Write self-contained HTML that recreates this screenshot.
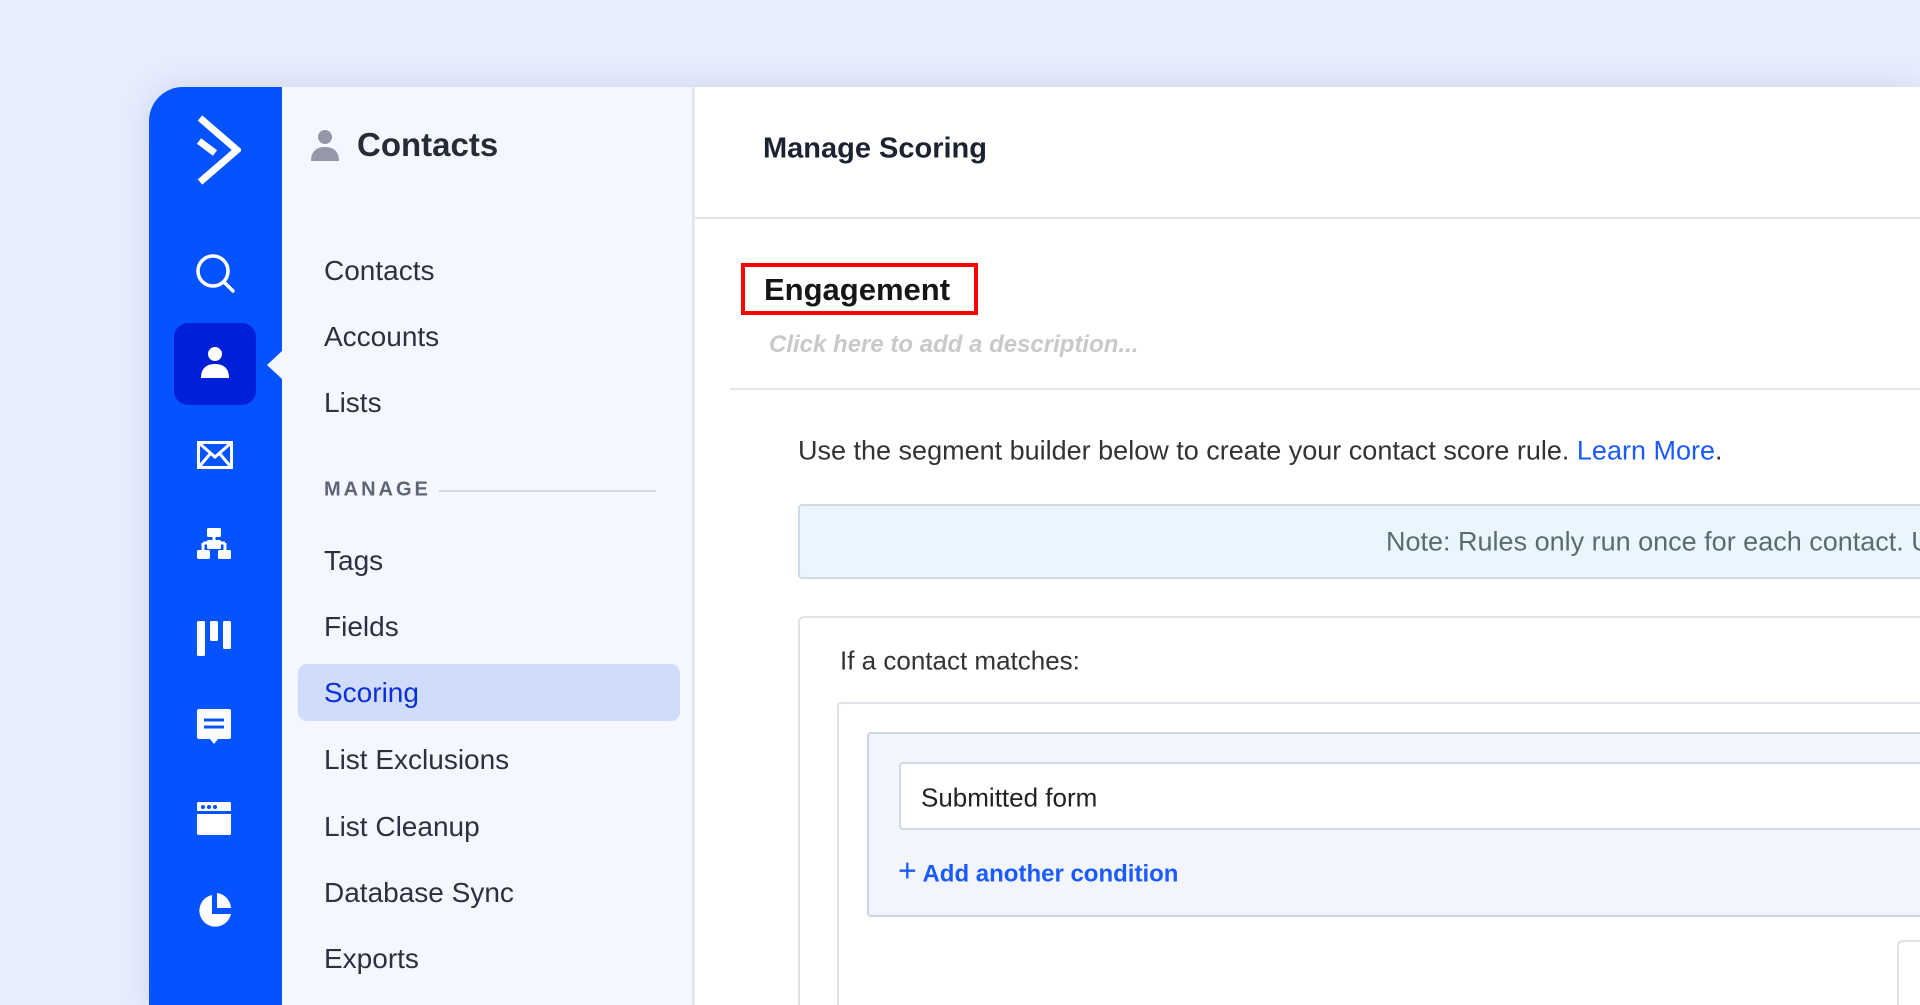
<!DOCTYPE html>
<html><head><meta charset="utf-8"><style>
*{margin:0;padding:0;box-sizing:border-box}
html,body{width:1920px;height:1005px;overflow:hidden}
body{background:#e7edfd;font-family:"Liberation Sans",sans-serif;position:relative}
.abs{position:absolute}
.panel{left:149px;top:87px;width:1771px;height:918px;border-top-left-radius:34px;overflow:hidden;box-shadow:0 0 30px rgba(60,80,140,.15)}
.side{left:0;top:0;width:133px;height:918px;background:#0552ff}
.sub{left:133px;top:0;width:412px;height:918px;background:#f5f7fe;border-right:2px solid #e1e5ee}
.main{left:546px;top:0;width:1225px;height:918px;background:#fff;overflow:hidden}
.nav{position:absolute;left:174px;font-size:28px;color:#2b3140;transform:translateY(-50%)}
.t{position:absolute;transform:translateY(-50%);white-space:nowrap}
</style></head><body>
<div class="abs panel">
 <div class="abs side">
  <svg class="abs" style="left:46px;top:28px" width="46" height="70" viewBox="0 0 46 70"><path d="M5 3 L42 35 L5 67" fill="none" stroke="#fff" stroke-width="7" stroke-linejoin="miter"/><path d="M4 26 L20 38" stroke="#fff" stroke-width="7"/></svg>
  <svg class="abs" style="left:46px;top:166px" width="44" height="44" viewBox="0 0 44 44"><circle cx="18" cy="18" r="15" fill="none" stroke="#fff" stroke-width="3.5"/><path d="M29 29 L38 38" stroke="#fff" stroke-width="3.5" stroke-linecap="round"/></svg>
  <div class="abs" style="left:25px;top:236px;width:82px;height:82px;background:#0020d8;border-radius:14px"></div>
  <svg class="abs" style="left:49px;top:258px" width="34" height="36" viewBox="0 0 34 36"><circle cx="17" cy="9" r="7" fill="#fff"/><path d="M3 33 C3 22 10 19 17 19 C24 19 31 22 31 33 Z" fill="#fff"/></svg>
  <div class="abs" style="left:118px;top:264px;width:0;height:0;border-top:14px solid transparent;border-bottom:14px solid transparent;border-right:15px solid #f5f7fe"></div>
  <svg class="abs" style="left:48px;top:354px" width="36" height="28" viewBox="0 0 36 28"><rect x="1.5" y="1.5" width="33" height="25" fill="none" stroke="#fff" stroke-width="3"/><path d="M2 2 L18 16 L34 2 M2 26 L13 13 M34 26 L23 13" stroke="#fff" stroke-width="3" fill="none"/></svg>
  <svg class="abs" style="left:48px;top:440px" width="34" height="36" viewBox="0 0 34 36"><rect x="10" y="1" width="14" height="9" rx="1.5" fill="#fff"/><path d="M17 10 V16 M6 16 H28 M6 16 V24 M28 16 V24" stroke="#fff" stroke-width="3" fill="none"/><rect x="0" y="23" width="13" height="9" rx="1.5" fill="#fff"/><rect x="21" y="23" width="13" height="9" rx="1.5" fill="#fff"/><rect x="10" y="13" width="14" height="9" rx="1.5" fill="#fff"/></svg>
  <svg class="abs" style="left:48px;top:534px" width="34" height="36" viewBox="0 0 34 36"><rect x="0" y="0" width="8" height="35" rx="1.5" fill="#fff"/><rect x="13" y="0" width="8" height="20" rx="1.5" fill="#fff"/><rect x="26" y="0" width="8" height="28" rx="1.5" fill="#fff"/></svg>
  <svg class="abs" style="left:48px;top:622px" width="34" height="36" viewBox="0 0 34 36"><path d="M2 0 H32 Q34 0 34 2 V28 Q34 30 32 30 H21 L17 35 L13 30 H2 Q0 30 0 28 V2 Q0 0 2 0 Z" fill="#fff"/><path d="M7 11 H27 M7 18 H27" stroke="#0552ff" stroke-width="3"/></svg>
  <svg class="abs" style="left:48px;top:715px" width="34" height="34" viewBox="0 0 34 34"><rect x="0" y="0" width="34" height="33" rx="1.5" fill="#fff"/><rect x="0" y="9" width="34" height="3" fill="#0552ff"/><circle cx="6" cy="5" r="2" fill="#0552ff"/><circle cx="12" cy="5" r="2" fill="#0552ff"/><circle cx="18" cy="5" r="2" fill="#0552ff"/></svg>
  <svg class="abs" style="left:48px;top:806px" width="36" height="36" viewBox="0 0 36 36"><path d="M15 2 A16 16 0 1 0 34 21 L15 21 Z" fill="#fff"/><path d="M20 0 A16 16 0 0 1 34 15 L20 15 Z" fill="#fff"/></svg>
 </div>
 <div class="abs sub">
  <svg class="abs" style="left:28px;top:42px" width="30" height="32" viewBox="0 0 30 32"><circle cx="15" cy="8" r="7" fill="#9498a8"/><path d="M1 32 C1 22 7 18 15 18 C23 18 29 22 29 32 Z" fill="#9498a8"/></svg>
  <div class="t" style="left:75px;top:58px;font-size:33px;font-weight:bold;color:#262b38">Contacts</div>
  <div class="nav" style="left:42px;top:184px">Contacts</div>
  <div class="nav" style="left:42px;top:250px">Accounts</div>
  <div class="nav" style="left:42px;top:316px">Lists</div>
  <div class="nav" style="left:42px;top:403px;font-size:20px;font-weight:bold;letter-spacing:3px;color:#5e6577">MANAGE</div>
  <div class="abs" style="left:157px;top:403px;width:217px;height:2px;background:#d3d8e4"></div>
  <div class="nav" style="left:42px;top:474px">Tags</div>
  <div class="nav" style="left:42px;top:540px">Fields</div>
  <div class="abs" style="left:16px;top:577px;width:382px;height:57px;background:#cfdcfc;border-radius:9px"></div>
  <div class="nav" style="left:42px;top:606px;color:#0d2fd8">Scoring</div>
  <div class="nav" style="left:42px;top:673px">List Exclusions</div>
  <div class="nav" style="left:42px;top:740px">List Cleanup</div>
  <div class="nav" style="left:42px;top:806px">Database Sync</div>
  <div class="nav" style="left:42px;top:872px">Exports</div>
 </div>
 <div class="abs main">
  <div class="t" style="left:68px;top:62px;font-size:29px;font-weight:bold;color:#1d2230">Manage Scoring</div>
  <div class="abs" style="left:0;top:130px;right:0;height:2px;background:#dfe3ea"></div>
  <div class="abs" style="left:46px;top:176px;width:237px;height:52px;border:4px solid #f00"></div>
  <div class="t" style="left:69px;top:203px;font-size:31px;font-weight:bold;color:#161616">Engagement</div>
  <div class="t" style="left:74px;top:258px;font-size:24px;font-weight:bold;font-style:italic;color:#c9c9c9">Click here to add a description...</div>
  <div class="abs" style="left:35px;top:301px;right:0;height:2px;background:#e8e8e8"></div>
  <div class="t" style="left:103px;top:364px;font-size:27px;color:#333">Use the segment builder below to create your contact score rule. <span style="color:#1a5aff">Learn More</span>.</div>
  <div class="abs" style="left:103px;top:417px;right:-10px;height:75px;background:#eaf6fd;border:2px solid #cfdce6;border-radius:4px"></div>
  <div class="t" style="left:691px;top:455px;font-size:27px;color:#5b6b75">Note: Rules only run once for each contact. U</div>
  <div class="abs" style="left:103px;top:529px;right:-10px;height:389px;border:2px solid #e3e3e3;border-bottom:none;border-radius:6px 6px 0 0"></div>
  <div class="t" style="left:145px;top:574px;font-size:26px;color:#333">If a contact matches:</div>
  <div class="abs" style="left:142px;top:615px;right:-10px;height:303px;border:2px solid #dde1e8;border-bottom:none;border-radius:4px 4px 0 0"></div>
  <div class="abs" style="left:172px;top:645px;right:-10px;height:185px;background:#f2f5fd;border:2px solid #cdd4e0;border-radius:4px"></div>
  <div class="abs" style="left:204px;top:675px;right:-10px;height:68px;background:#fff;border:2px solid #d4d9e2;border-radius:4px"></div>
  <div class="t" style="left:226px;top:711px;font-size:26px;color:#222">Submitted form</div>
  <div class="t" style="left:203px;top:784px;font-size:24px;font-weight:bold;color:#1a5aff"><span style="font-size:32px;font-weight:normal">+</span> Add another condition</div>
  <div class="abs" style="left:1202px;top:853px;width:40px;height:65px;border:2px solid #dde1e8;border-bottom:none;border-radius:6px 6px 0 0;background:#fff"></div>
 </div>
</div>
</body></html>
